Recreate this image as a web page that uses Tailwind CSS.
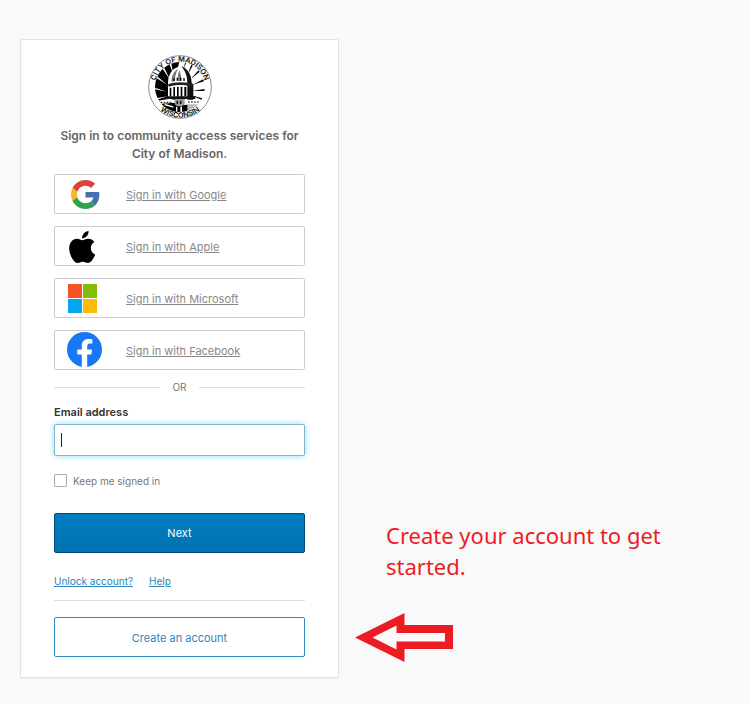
<!DOCTYPE html>
<html lang="en">
  <head>
    <meta charset="UTF-8" />
    <meta name="viewport" content="width=device-width, initial-scale=1.0" />
    <title>City of Madison - Sign In</title>
    <script src="https://cdn.jsdelivr.net/npm/@tailwindcss/browser@4"></script>
  </head>
  <body class="bg-[#f9f9f9] font-['Inter',sans-serif] text-[11px] text-[#777]">
    <div class="flex items-start min-h-screen pl-5 pt-[39px] pb-6">
      <main
        class="w-[319px] shrink-0 bg-white border border-[#e2e2e2] rounded-xs shadow-xs px-[33px] pt-[15px] pb-5"
      >
        <!-- City seal -->
        <svg
          class="block mx-auto size-16"
          viewBox="22 22 192 192"
          role="img"
          aria-label="City of Madison seal"
        >
          <defs>
            <clipPath id="seal-inner"><circle cx="118" cy="118" r="75" /></clipPath>
            <path id="seal-top" d="M42 118a76 76 0 0 1 152 0" />
            <path id="seal-bottom" d="M26 118a92 92 0 0 0 184 0" />
          </defs>
          <circle cx="118" cy="118" r="94" fill="#fff" stroke="#777" stroke-width="2.5" />
          <g clip-path="url(#seal-inner)">
            <path d="M118 40H40v160h75l5-100z" fill="#000" />
            <path
              d="M80 112 43 88l3-5zM88 96 62 58l6-3zM98 80 84 44l7-2zM78 132l-38-8v-5zM80 146l-36 12-2-5z"
              fill="#fff"
            />
            <path
              d="m140 82 13-34 5 3zM148 96l27-30 4 5zM154 112l34-17 2 6zM154 130l38-6v6zM128 64l8-26 4 2zM150 142l42 12-2 6z"
              fill="#000"
            />
            <path d="M82 136V108c0-24 10-44 30-50l4-16h4l4 16c20 6 32 26 32 50v46H82z" fill="#fff" />
            <path d="M122 56c20 7 31 26 31 50l5 4v46h-18v-48c0-22-6-38-18-52z" fill="#111" />
            <path d="M92 102c1-18 8-32 20-38-7 12-9 24-9 36zm19-2c0-14 2-24 5-33 4 10 6 21 6 33z" fill="#777" />
            <path d="M82 110c18-8 56-8 74 0l-2 7c-20-7-50-7-70 0z" fill="#222" />
            <path
              d="M87 120h5v26h-5zM98 118h5v28h-5zM109 117h5v30h-5zM120 117h5v30h-5zM131 118h6v28h-6z"
              fill="#000"
            />
            <path d="M98 101v-9h4v8zM108 99v-9h4v9zM118 99v-9h4v9zM128 100v-9h4v9z" fill="#000" />
            <path d="M76 146h88v8H76z" fill="#111" />
            <path d="M48 160l40-7 16 4v8l-50 4zM132 157l56 1-5 12-51-2z" fill="#fff" />
            <path d="M142 163h38M60 164h34" stroke="#000" stroke-width="3" stroke-dasharray="5 4" />
            <path d="M136 170h46l-32 24h-32z" fill="#bbb" />
            <path d="M70 172h70v30H70z" fill="#000" />
            <path d="M102 154h30v16l-8 6h-14l-8-6z" fill="#999" />
            <path d="M108 160h4v9h-4zM118 160h4v9h-4z" fill="#000" />
            <path d="M106 177h4v18h-4zM119 177h5v18h-5zM72 168l26 8v4l-26-7z" fill="#fff" />
          </g>
          <g
            font-family="Inter, sans-serif"
            font-weight="600"
            fill="#111"
            text-anchor="middle"
          >
            <text font-size="22"><textPath href="#seal-top" startOffset="50%">CITY OF MADISON</textPath></text>
            <text font-size="22"><textPath href="#seal-bottom" startOffset="50%">WISCONSIN</textPath></text>
          </g>
        </svg>

        <h1 class="mt-2 mb-[11px] text-center text-xs leading-[18px] font-semibold text-[#666]">
          Sign in to community access services for City of Madison.
        </h1>

        <div class="flex flex-col gap-3">
          <a
            href="#"
            class="flex items-center gap-[23px] h-10 pl-3 border border-[#ccc] rounded-xs text-[#888] underline"
          >
            <svg class="size-9" viewBox="0 0 36 36" aria-hidden="true">
              <g transform="translate(4 4) scale(.604)">
                <path
                  fill="#db4437"
                  d="M24 9.5c3.54 0 6.71 1.22 9.21 3.6l6.85-6.85C35.9 2.38 30.47 0 24 0 14.62 0 6.51 5.38 2.56 13.22l7.98 6.19C12.43 13.72 17.74 9.5 24 9.5z"
                />
                <path
                  fill="#4a6faf"
                  d="M46.98 24.55c0-1.57-.15-3.09-.38-4.55H24v9.02h12.94c-.58 2.96-2.26 5.48-4.78 7.18l7.73 6c4.51-4.18 7.09-10.36 7.09-17.65z"
                />
                <path
                  fill="#f4b52b"
                  d="M10.53 28.59c-.48-1.45-.76-2.99-.76-4.59s.27-3.14.76-4.59l-7.98-6.19C.92 16.46 0 20.12 0 24c0 3.88.92 7.54 2.56 10.78l7.97-6.19z"
                />
                <path
                  fill="#31a350"
                  d="M24 48c6.48 0 11.93-2.13 15.89-5.81l-7.73-6c-2.15 1.45-4.92 2.3-8.16 2.3-6.26 0-11.57-4.22-13.47-9.91l-7.98 6.19C6.51 42.62 14.62 48 24 48z"
                />
              </g>
            </svg>
            <span class="pt-0.5">Sign in with Google</span>
          </a>
          <a
            href="#"
            class="flex items-center gap-[23px] h-10 pl-3 border border-[#ccc] rounded-xs text-[#888] underline"
          >
            <svg class="size-9" viewBox="0 0 36 36" aria-hidden="true">
              <path
                transform="translate(-4 -.2) scale(1.6)"
                d="M18.71 19.5c-.83 1.24-1.71 2.45-3.05 2.47-1.34.03-1.77-.79-3.29-.79-1.53 0-2 .77-3.27.82-1.31.05-2.3-1.32-3.14-2.53C4.25 17 2.94 12.45 4.7 9.39c.87-1.52 2.43-2.48 4.12-2.51 1.28-.02 2.5.87 3.29.87.78 0 2.26-1.07 3.81-.91.65.03 2.47.26 3.64 1.98-.09.06-2.17 1.28-2.15 3.81.03 3.02 2.65 4.03 2.68 4.04-.03.07-.42 1.44-1.38 2.83M13 3.5c.73-.83 1.94-1.46 2.94-1.5.13 1.17-.34 2.35-1.04 3.19-.69.85-1.83 1.51-2.95 1.42-.15-1.15.41-2.35 1.05-3.11z"
              />
            </svg>
            <span class="pt-0.5">Sign in with Apple</span>
          </a>
          <a
            href="#"
            class="flex items-center gap-[23px] h-10 pl-3 border border-[#ccc] rounded-xs text-[#888] underline"
          >
            <svg class="size-9" viewBox="0 0 36 36" aria-hidden="true">
              <path fill="#f35325" d="M1 4h14v14H1z" />
              <path fill="#81bc06" d="M16 4h14v14H16z" />
              <path fill="#05a6f0" d="M1 19h14v14H1z" />
              <path fill="#ffba08" d="M16 19h14v14H16z" />
            </svg>
            <span class="pt-0.5">Sign in with Microsoft</span>
          </a>
          <a
            href="#"
            class="flex items-center gap-[23px] h-10 pl-3 border border-[#ccc] rounded-xs text-[#888] underline"
          >
            <svg class="size-9" viewBox="0 0 36 36" aria-hidden="true">
              <circle cx="17.5" cy="17.5" r="17.5" fill="#1877f2" />
              <path
                fill="#fff"
                d="M14.8 34.8V22.6h-4.5v-5h4.5v-3.9c0-4.4 2.6-6.8 6.6-6.8 1.9 0 3.9.3 3.9.3v4.3h-2.2c-2.2 0-2.9 1.4-2.9 2.8v3.3h4.9l-.8 5h-4.1v12.2a17.5 17.5 0 0 1-5.4 0z"
              />
            </svg>
            <span class="pt-0.5">Sign in with Facebook</span>
          </a>
        </div>

        <div class="flex items-center gap-3 mt-[9px] text-[10px] leading-4">
          <span class="grow h-px bg-[#ddd]"></span>
          OR
          <span class="grow h-px bg-[#ddd]"></span>
        </div>

        <form action="#" method="post">
          <label for="email" class="block mt-[9px] mb-1 leading-4 font-semibold text-[#333]">
            Email address
          </label>
          <div class="relative">
            <input
              type="email"
              id="email"
              name="email"
              class="block w-full h-8 px-2 bg-white border border-[#84b4cc] rounded-xs shadow-[0_0_6px_#8cdcf5] outline-none caret-transparent"
            />
            <span class="absolute left-[7px] top-[9px] h-[14px] w-px bg-[#222]"></span>
          </div>

          <div class="flex items-center gap-1.5 mt-4 mb-[25px] h-4 text-[10px]">
            <input
              type="checkbox"
              id="remember"
              name="remember"
              class="appearance-none size-[13px] bg-white border border-[#aaa] rounded-[1px] checked:bg-[#0074b3]"
            />
            <label for="remember" class="pt-0.5">Keep me signed in</label>
          </div>

          <button
            type="submit"
            class="block w-full h-10 border border-[#004b75] rounded-xs bg-linear-to-b from-[#007dc1] to-[#0073b2] text-white"
          >
            Next
          </button>
        </form>

        <div class="flex gap-4 mt-5 pb-[11px] border-b border-[#ddd] text-[10px] leading-4 text-[#2a85c0] underline">
          <a href="#">Unlock account?</a>
          <a href="#">Help</a>
        </div>

        <button
          type="button"
          class="block w-full h-10 mt-4 pt-0.5 border border-[#2e8bc0] rounded-xs bg-white text-[#3483ba]"
        >
          Create an account
        </button>
      </main>

      <aside class="ml-4 mt-[481px]">
        <p class="ml-[31px] max-w-[300px] font-['Noto_Sans',sans-serif] text-[22px] leading-[31px] text-[#ed1c24]">
          Create your account to get started.
        </p>
        <svg class="mt-[31px] w-[98px] h-[49px]" viewBox="0 0 98 49" aria-hidden="true">
          <path
            fill="#ed1c24"
            fill-rule="evenodd"
            d="M0 24.5 49.5 0v12H98v24H49.5v13zM17.5 24.5 41.5 36.5V28.5H90v-8.5H41.5v-7.5z"
          />
        </svg>
      </aside>
    </div>
  </body>
</html>
